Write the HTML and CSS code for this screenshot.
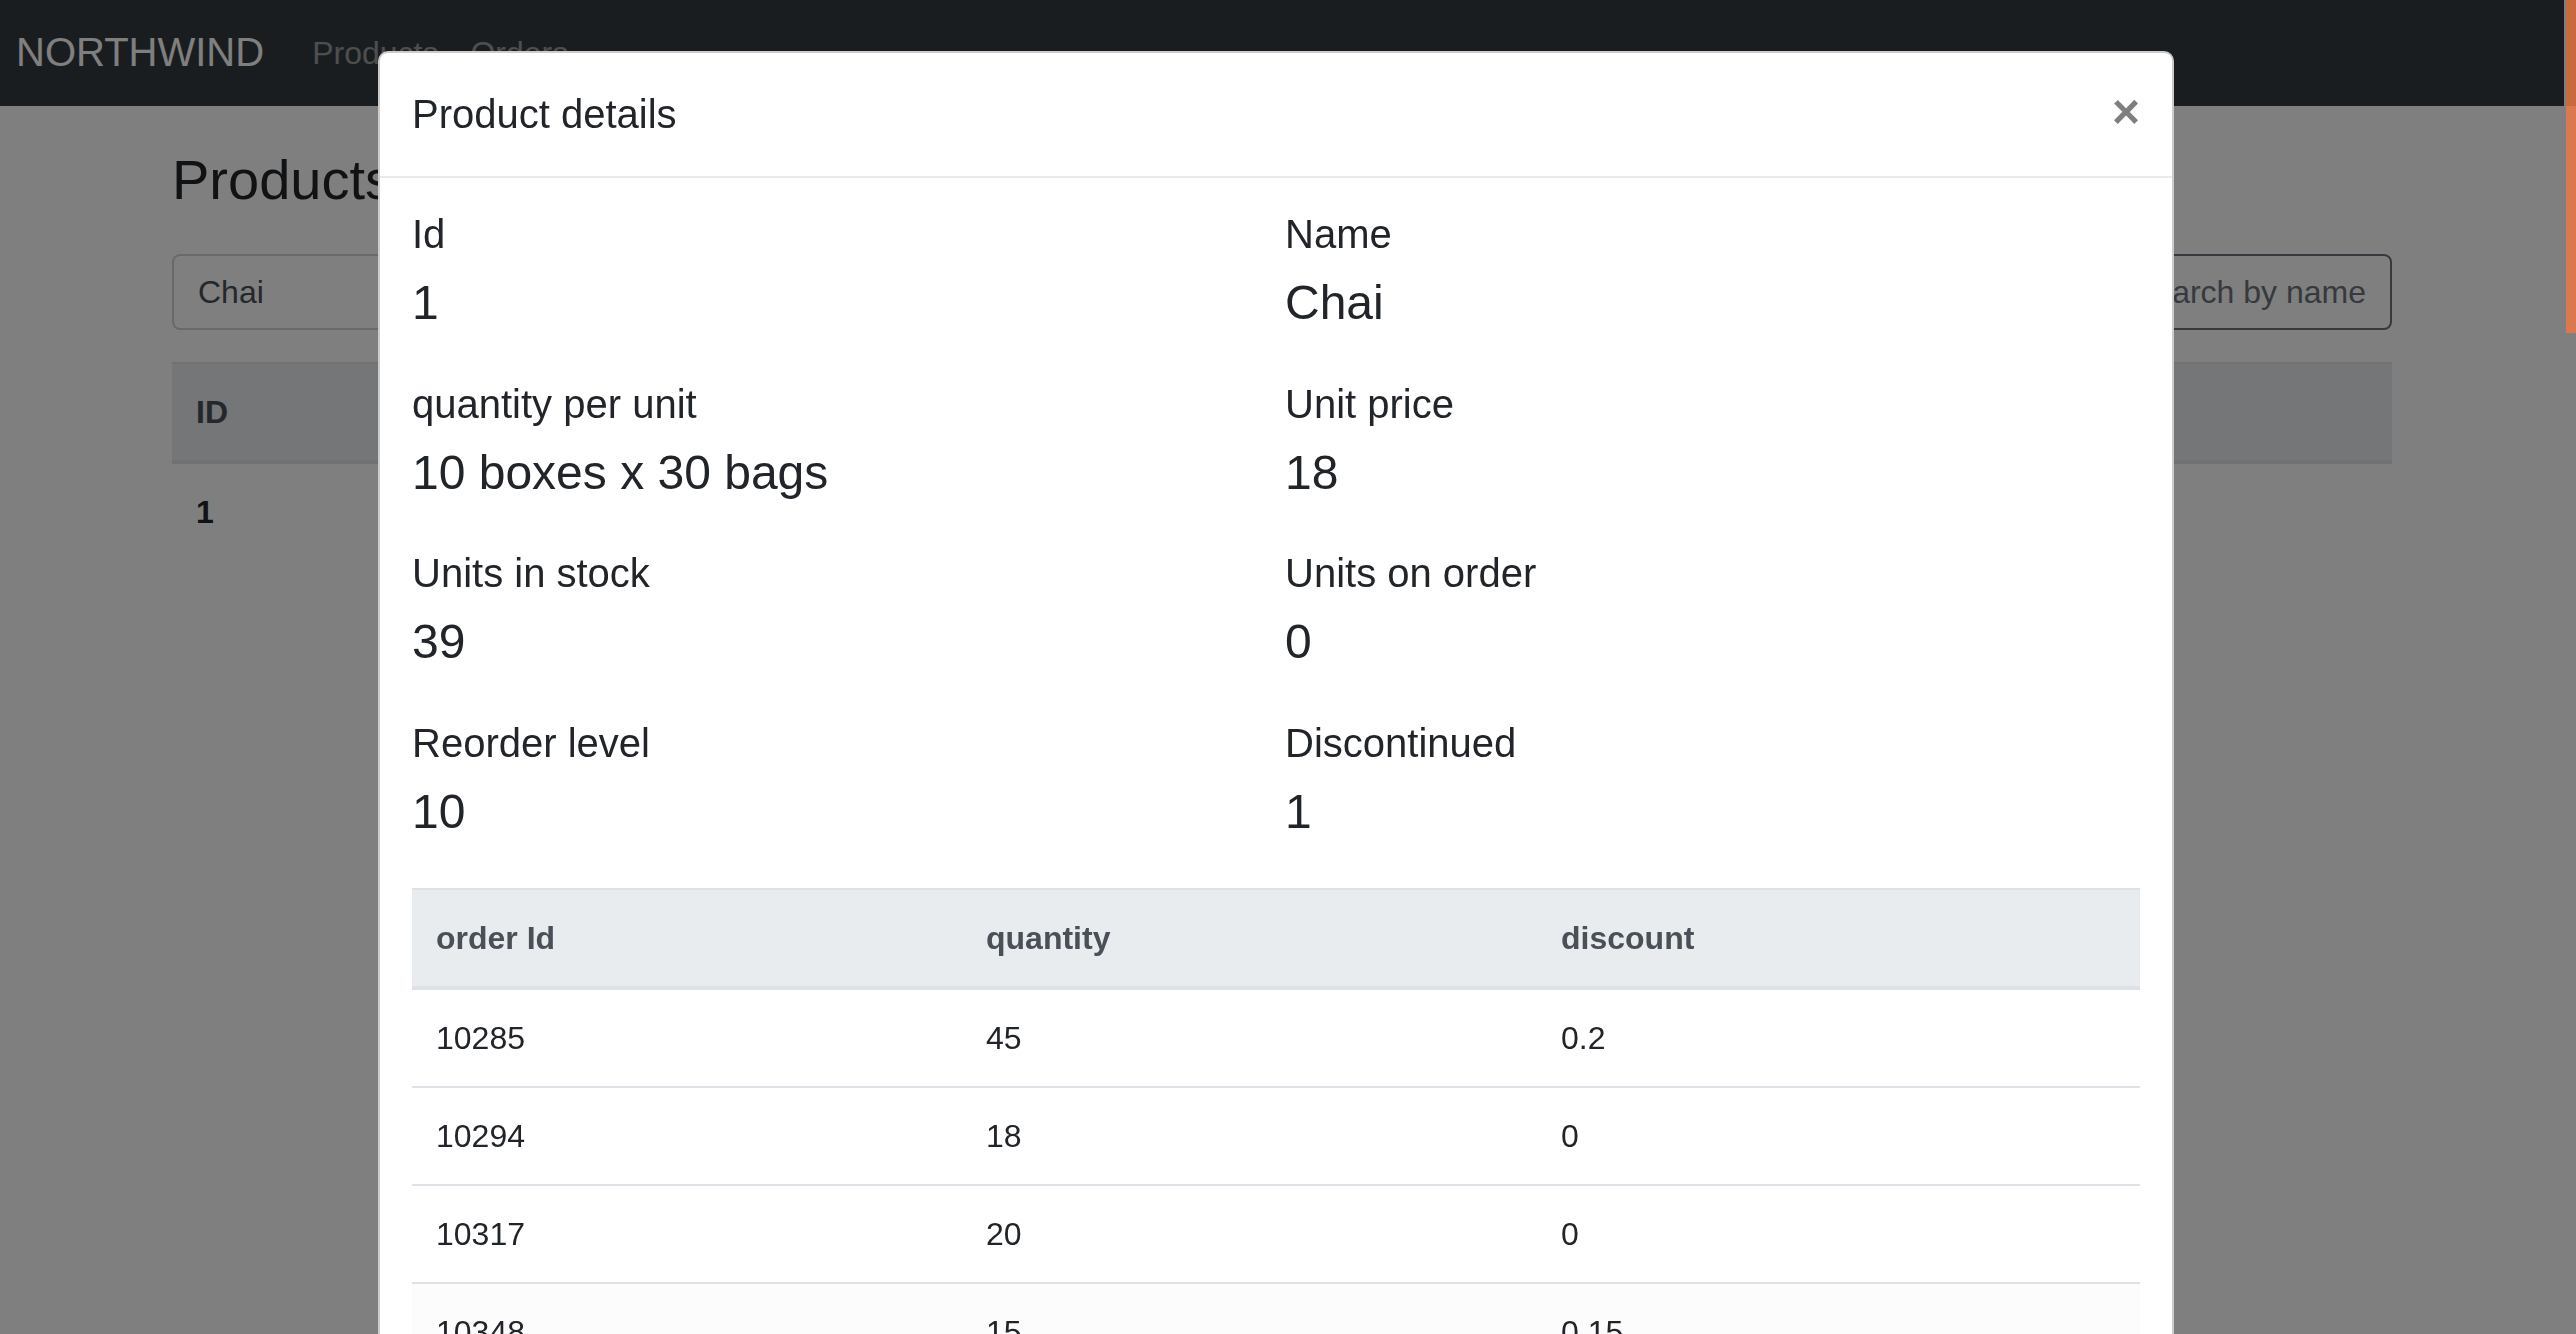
FILE: index.html
```html
<!DOCTYPE html>
<html lang="en">
<head>
<meta charset="utf-8">
<title>Northwind – Products</title>
<link rel="stylesheet" href="styles.css">
</head>
<body>
<div class="page">
  <nav class="navbar">
    <a class="brand" href="#">NORTHWIND</a>
    <ul class="nav">
      <li><a class="nav-link" href="#">Products</a></li>
      <li><a class="nav-link" href="#">Orders</a></li>
    </ul>
  </nav>
  <main class="container">
    <h1 class="page-title">Products</h1>
    <form class="search">
      <input class="search-input" type="text" value="Chai">
      <button class="search-btn" type="button">Search by name</button>
    </form>
    <table class="table products">
      <colgroup><col class="c-id"><col class="c-rest"></colgroup>
      <thead>
        <tr><th>ID</th><th></th></tr>
      </thead>
      <tbody>
        <tr><th>1</th><td></td></tr>
      </tbody>
    </table>
  </main>
</div>

<div class="backdrop"></div>
<div class="scroll-thumb"></div>

<div class="modal">
  <div class="modal-dialog">
    <div class="modal-content">
      <div class="modal-header">
        <h5 class="modal-title">Product details</h5>
        <button class="close" type="button" aria-label="Close">×</button>
      </div>
      <div class="modal-body">
        <div class="details">
          <div class="field"><h5 class="label">Id</h5><h4 class="value">1</h4></div>
          <div class="field"><h5 class="label">Name</h5><h4 class="value">Chai</h4></div>
          <div class="field"><h5 class="label">quantity per unit</h5><h4 class="value">10 boxes x 30 bags</h4></div>
          <div class="field"><h5 class="label">Unit price</h5><h4 class="value">18</h4></div>
          <div class="field"><h5 class="label">Units in stock</h5><h4 class="value">39</h4></div>
          <div class="field"><h5 class="label">Units on order</h5><h4 class="value">0</h4></div>
          <div class="field"><h5 class="label">Reorder level</h5><h4 class="value">10</h4></div>
          <div class="field"><h5 class="label">Discontinued</h5><h4 class="value">1</h4></div>
        </div>
        <table class="table orders">
          <colgroup><col class="o-id"><col class="o-qty"><col class="o-disc"></colgroup>
          <thead>
            <tr><th>order Id</th><th>quantity</th><th>discount</th></tr>
          </thead>
          <tbody>
            <tr><td>10285</td><td>45</td><td>0.2</td></tr>
            <tr><td>10294</td><td>18</td><td>0</td></tr>
            <tr><td>10317</td><td>20</td><td>0</td></tr>
            <tr class="last"><td>10348</td><td>15</td><td>0.15</td></tr>
          </tbody>
        </table>
      </div>
    </div>
  </div>
</div>
</body>
</html>
```

FILE: styles.css
```css
* {
  box-sizing: border-box;
}

html,
body {
  margin: 0;
  height: 100%;
}

body {
  font-family: "Liberation Sans", Arial, sans-serif;
  font-size: 32px;
  line-height: 1.5;
  color: #212529;
  background: #fff;
  overflow: hidden;
}

a {
  text-decoration: none;
}

.page {
  padding-right: 12px;
}

/* Navbar */
.navbar {
  display: flex;
  align-items: center;
  height: 106px;
  padding: 0 16px;
  background: #343a40;
}

.brand {
  font-size: 40px;
  line-height: 46px;
  color: #fff;
  margin-right: 32px;
  margin-top: -2px;
}

.nav {
  display: flex;
  list-style: none;
  margin: 0;
  padding: 0;
}

.nav-link {
  display: block;
  padding: 0 16px;
  line-height: 48px;
  color: rgba(255, 255, 255, 0.5);
}

/* Page content */
.container {
  max-width: 2280px;
  margin: 0 auto;
  padding: 0 30px;
}

.page-title {
  font-size: 56px;
  font-weight: 500;
  line-height: 1.2;
  margin: 40px 0 41px;
}

.search {
  display: flex;
  height: 76px;
  margin: 0 0 32px;
}

.search-input {
  flex: 1;
  min-width: 0;
  height: 76px;
  font: inherit;
  color: #495057;
  padding: 12px 24px;
  border: 2px solid #ced4da;
  border-radius: 8px 0 0 8px;
  background: #fff;
}

.search-btn {
  height: 76px;
  font: inherit;
  color: #6c757d;
  background: transparent;
  border: 2px solid #6c757d;
  border-radius: 0 8px 8px 0;
  padding: 12px 24px;
  margin-left: -2px;
}

/* Tables */
.table {
  width: 100%;
  border-collapse: collapse;
  table-layout: fixed;
}

.table th,
.table td {
  padding: 24px;
  height: 98px;
  line-height: 48px;
  text-align: left;
  vertical-align: top;
  border-top: 2px solid #dee2e6;
  white-space: nowrap;
  overflow: hidden;
}

.table thead th {
  background: #e9ecef;
  color: #495057;
  font-weight: 700;
  border-bottom: 4px solid #dee2e6;
}

.table tbody th {
  font-weight: 700;
}

.c-id { width: 300px; }

/* Overlay */
.backdrop {
  position: fixed;
  inset: 0;
  background: rgba(0, 0, 0, 0.5);
}

.scroll-thumb {
  position: fixed;
  top: 0;
  right: 0;
  width: 10px;
  height: 333px;
  background: linear-gradient(#c76a3e 0 106px, #dc7850 106px);
}

/* Modal */
.modal {
  position: fixed;
  inset: 0;
  overflow: hidden;
}

.modal-dialog {
  width: 1796px;
  margin: 51px 0 0 378px;
}

.modal-content {
  background: #fff;
  border: 2px solid rgba(0, 0, 0, 0.2);
  border-radius: 10px;
}

.modal-header {
  display: flex;
  align-items: flex-start;
  padding: 31px 32px 32px;
  border-bottom: 2px solid #e9ecef;
}

.modal-title {
  margin: 0;
  font-size: 40px;
  font-weight: 500;
  line-height: 1.5;
}

.close {
  margin: -28px -32px -32px auto;
  padding: 32px;
  background: transparent;
  border: 0;
  font-family: inherit;
  font-size: 48px;
  font-weight: 700;
  line-height: 1;
  color: #000;
  opacity: 0.5;
  text-shadow: 0 2px 0 #fff;
}

.modal-body {
  padding: 32px;
}

.details {
  display: grid;
  grid-template-columns: 873px 1fr;
}

.field {
  margin-bottom: 32px;
}

.label {
  margin: 0 0 16px;
  font-size: 40px;
  font-weight: 500;
  line-height: 1.2;
}

.value {
  margin: 0 0 16px;
  font-size: 48px;
  font-weight: 500;
  line-height: 1.2;
}

.o-id { width: 550px; }
.o-qty { width: 575px; }

.orders tr.last td {
  background: #fcfcfc;
}
```
